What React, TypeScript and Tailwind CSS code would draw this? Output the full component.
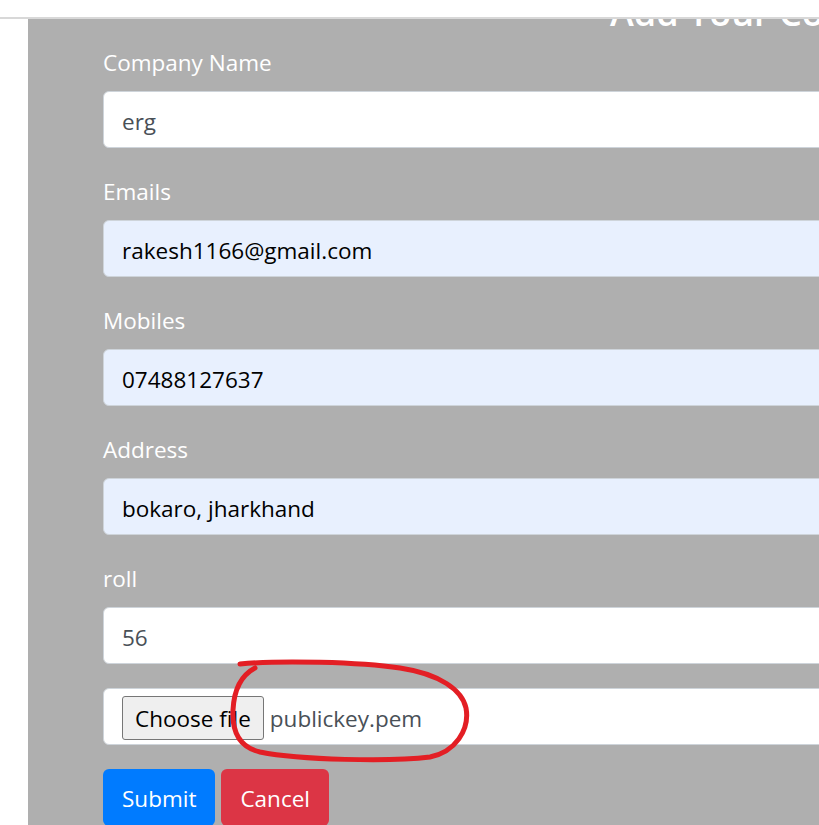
import React from "react";

const font = { fontFamily: '"Open Sans", "Noto Sans", sans-serif' };

function Field({
  label,
  value,
  autofill,
}: {
  label: string;
  value: string;
  autofill?: boolean;
}) {
  return (
    <div className="mb-[24px]">
      <label className="block pt-[2px] mb-[10px] text-[22.5px] leading-[36px] text-white">{label}</label>
      <div
        className={
          "h-[57px] w-[900px] rounded-[6px] border border-[#ced4da] px-[18px] pt-[4px] flex items-center text-[22.5px] " +
          (autofill ? "bg-[#e8f0fe] text-black" : "bg-white text-[#495057]")
        }
      >
        {value}
      </div>
    </div>
  );
}

export default function App() {
  return (
    <div className="relative h-[825px] w-[819px] overflow-hidden bg-white" style={font}>
      {/* top nav strip, overlaps the heading */}
      <div className="absolute left-0 right-0 top-0 z-10 h-[19px] bg-white border-b-2 border-[#d8d8d8]" />

      <div className="flex h-full">
        <div className="w-[28px] shrink-0 bg-white" />
        <div className="flex-1 overflow-hidden bg-[#afafaf]">
          <h2 className="mt-[-9px] mb-[9px] ml-[582px] whitespace-nowrap text-[36px] font-semibold leading-[43px] text-white">
            Add Your Company Details
          </h2>

          <div className="pl-[75px]">
            <Field label="Company Name" value="erg" />
            <Field label="Emails" value="rakesh1166@gmail.com" autofill />
            <Field label="Mobiles" value="07488127637" autofill />
            <Field label="Address" value="bokaro, jharkhand" autofill />
            <Field label="roll" value="56" />

            <div className="mb-[24px] h-[57px] w-[900px] rounded-[6px] border border-[#ced4da] bg-white pl-[18px] pt-[2px] flex items-center text-[22.5px]">
              <span className="h-[44px] rounded-[3px] border border-[#767676] bg-[#efefef] px-[12px] pt-[3px] flex items-center text-black">
                Choose file
              </span>
              <span className="ml-[6px] pt-[3px] text-[#495057]">publickey.pem</span>
            </div>

            <div className="flex gap-[6px]">
              <button className="h-[57px] rounded-[6px] bg-[#007bff] px-[19px] pt-[3px] text-[22.5px] text-white">
                Submit
              </button>
              <button className="h-[57px] rounded-[6px] bg-[#dc3545] px-[19px] pt-[3px] text-[22.5px] text-white">
                Cancel
              </button>
            </div>
          </div>
        </div>
      </div>

      {/* hand-drawn red marking */}
      <svg
        className="pointer-events-none absolute left-[220px] top-[650px]"
        width="260"
        height="120"
        viewBox="0 0 260 120"
        fill="none"
      >
        <path
          d="M20,14 C60,10 140,12 180,18 C220,24 242,40 246,58 C250,80 235,102 210,107 C170,112 80,110 40,102 C18,97 12,80 13,60 C14,40 20,26 35,18"
          stroke="#e31e24"
          strokeWidth="5"
          strokeLinecap="round"
          strokeLinejoin="round"
        />
      </svg>
    </div>
  );
}
